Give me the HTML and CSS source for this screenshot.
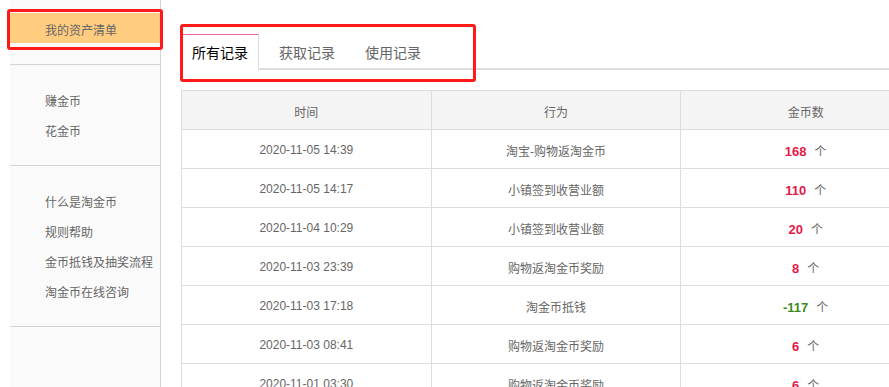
FILE: index.html
```html
<!DOCTYPE html>
<html lang="zh-CN">
<head>
    <meta charset="UTF-8">
    <meta name="viewport" content="width=device-width, initial-scale=1.0">
    <title>我的资产清单</title>
    <link rel="stylesheet" href="styles.css">
</head>
<body>
    <div class="page">
        <div class="sidebar">
            <ul class="menu menu-first">
                <li class="active">我的资产清单</li>
            </ul>
            <ul class="menu">
                <li>赚金币</li>
                <li>花金币</li>
            </ul>
            <ul class="menu">
                <li>什么是淘金币</li>
                <li>规则帮助</li>
                <li>金币抵钱及抽奖流程</li>
                <li>淘金币在线咨询</li>
            </ul>
        </div>

        <div class="main">
            <div class="tabs">
                <div class="tab tab-active">所有记录</div>
                <div class="tab">获取记录</div>
                <div class="tab">使用记录</div>
            </div>

            <table class="records">
                <thead>
                    <tr>
                        <th>时间</th>
                        <th>行为</th>
                        <th>金币数</th>
                    </tr>
                </thead>
                <tbody>
                    <tr><td>2020-11-05 14:39</td><td>淘宝-购物返淘金币</td><td><span class="num">168</span>个</td></tr>
                    <tr><td>2020-11-05 14:17</td><td>小镇签到收营业额</td><td><span class="num">110</span>个</td></tr>
                    <tr><td>2020-11-04 10:29</td><td>小镇签到收营业额</td><td><span class="num">20</span>个</td></tr>
                    <tr><td>2020-11-03 23:39</td><td>购物返淘金币奖励</td><td><span class="num">8</span>个</td></tr>
                    <tr><td>2020-11-03 17:18</td><td>淘金币抵钱</td><td><span class="num minus">-117</span>个</td></tr>
                    <tr><td>2020-11-03 08:41</td><td>购物返淘金币奖励</td><td><span class="num">6</span>个</td></tr>
                    <tr><td>2020-11-01 03:30</td><td>购物返淘金币奖励</td><td><span class="num">6</span>个</td></tr>
                </tbody>
            </table>
        </div>
    </div>

    <!-- annotation boxes drawn over the page -->
    <div class="mark mark-menu"></div>
    <div class="mark mark-tabs"></div>
</body>
</html>
```

FILE: styles.css
```css
/* General Styling */
* {
    margin: 0;
    padding: 0;
    box-sizing: border-box;
    font-family: 'Liberation Sans', Tahoma, 'Noto Sans CJK SC', sans-serif;
}

body {
    background-color: #ffffff;
    overflow: hidden;
    color: #666;
    font-size: 12px;
}

.page {
    display: flex;
    align-items: flex-start;
    padding-left: 10px;
}

/* Sidebar Styling */
.sidebar {
    width: 151px;
    min-height: 600px;
    background-color: #fafafa;
    border-right: 1px solid #d4d4d4;
    flex-shrink: 0;
}

.menu {
    list-style: none;
    padding: 20px 0;
    border-bottom: 1px solid #d4d4d4;
}

.menu-first {
    padding-top: 13px;
    padding-bottom: 21px;
}

.menu li {
    height: 30px;
    line-height: 30px;
    padding-top: 2px;
    padding-left: 35px;
    color: #666;
}

.menu li.active {
    padding-top: 3px;
    background-color: #ffcc80;
}

/* Main Styling */
.main {
    margin-left: 20px;
    width: 750px;
    flex-shrink: 0;
}

.tabs {
    display: flex;
    margin-top: 34px;
    height: 36px;
    border-bottom: 2px solid #dddddd;
}

.tab {
    height: 34px;
    line-height: 34px;
    padding: 2px 15px 0;
    font-size: 14px;
    color: #666;
}

.tab:nth-child(2) {
    padding-left: 20px;
}

.tab-active {
    height: 36px;
    padding: 2px 10px 0 11px;
    margin-bottom: -2px;
    background-color: #ffffff;
    border-top: 1px solid #f5679c;
    border-right: 1px solid #dddddd;
    line-height: 33px;
    color: #000;
}

/* Table Styling */
.records {
    margin-top: 20px;
    width: 750px;
    border-collapse: collapse;
    table-layout: fixed;
}

.records th,
.records td {
    height: 39px;
    padding-top: 2px;
    border: 1px solid #dddddd;
    text-align: center;
    font-weight: normal;
    color: #666;
    font-size: 12px;
}

.records th {
    background-color: #f4f4f4;
}

.num {
    font-size: 13px;
    font-weight: bold;
    color: #e5194a;
    margin-right: 8px;
}

.num.minus {
    color: #3b8a22;
}

/* Annotation boxes */
.mark {
    position: absolute;
    border: 3px solid #ff1a1a;
    border-radius: 3px;
}

.mark-menu {
    left: 7px;
    top: 9px;
    width: 156px;
    height: 41px;
}

.mark-tabs {
    left: 180px;
    top: 24px;
    width: 296px;
    height: 58px;
}
```
